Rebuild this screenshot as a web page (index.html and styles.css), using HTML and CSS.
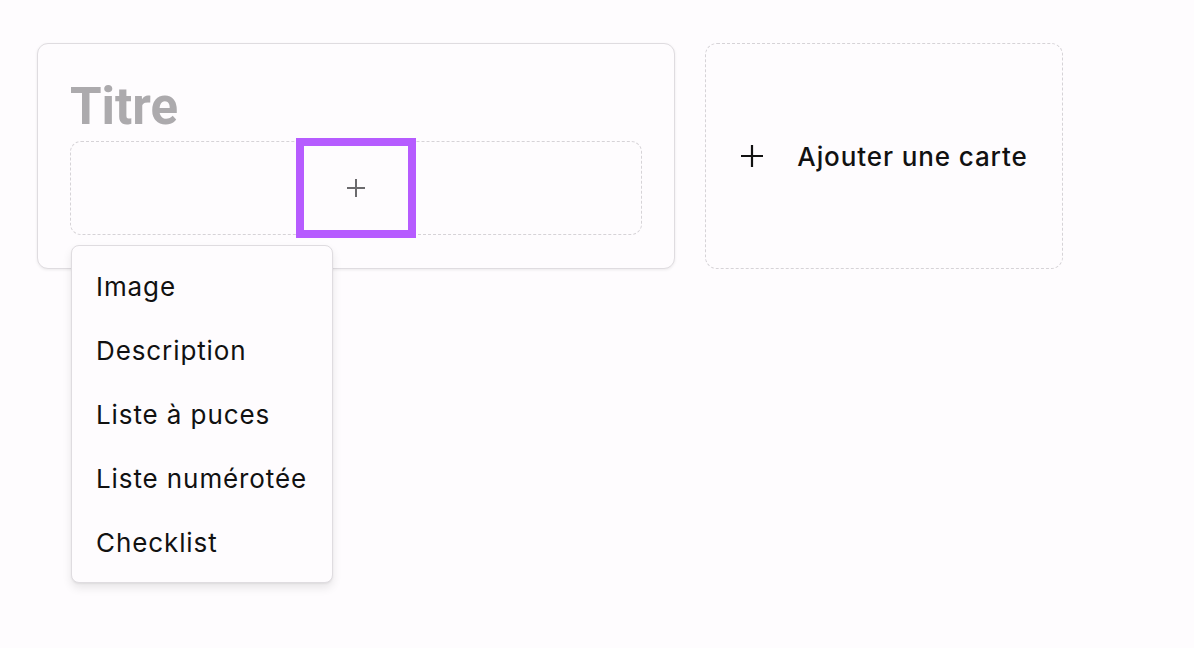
FILE: index.html
```html
<!DOCTYPE html>
<html lang="fr">
<head>
<meta charset="utf-8">
<title>Cartes</title>
<link rel="stylesheet" href="styles.css">
</head>
<body>
<main class="board">
  <section class="card">
    <h2 class="card-title">Titre</h2>
    <div class="drop-zone">
      <button class="add-block" type="button" aria-label="Ajouter un bloc">
        <svg width="22" height="22" viewBox="0 0 22 22" aria-hidden="true"><path d="M11 2v18M2 11h18" stroke="#6b6a6d" stroke-width="2" fill="none"/></svg>
      </button>
      <ul class="menu">
        <li class="menu-item">Image</li>
        <li class="menu-item">Description</li>
        <li class="menu-item">Liste à puces</li>
        <li class="menu-item">Liste numérotée</li>
        <li class="menu-item">Checklist</li>
      </ul>
    </div>
  </section>
  <button class="add-card" type="button">
    <svg width="24" height="24" viewBox="0 0 24 24" aria-hidden="true"><path d="M12 1v22M1 12h22" stroke="#111" stroke-width="2.2" fill="none"/></svg>
    <span>Ajouter une carte</span>
  </button>
</main>
</body>
</html>
```

FILE: styles.css
```css
* { box-sizing: border-box; }
html, body { margin: 0; padding: 0; }
body {
  background: #fefcfe;
  font-family: Inter, "Noto Sans", sans-serif;
  color: #111;
  width: 1194px;
  height: 648px;
  overflow: hidden;
}
.board {
  display: flex;
  align-items: flex-start;
  gap: 30px;
  padding: 43px 0 0 37px;
}
.card {
  width: 638px;
  height: 226px;
  border: 1px solid #dfdce0;
  border-radius: 11px;
  background: #fefcfe;
  box-shadow: 0 1px 3px rgba(0,0,0,0.08);
  padding: 32px;
  display: flex;
  flex-direction: column;
}
.card-title {
  margin: 0 0 3px;
  font-family: Roboto, "Liberation Sans", sans-serif;
  font-weight: 700;
  font-size: 51px;
  line-height: 62px;
  color: #acaaad;
}
.drop-zone {
  position: relative;
  height: 94px;
  border: 1px dashed #d6d3d7;
  border-radius: 11px;
  display: flex;
  align-items: center;
  justify-content: center;
}
.add-block {
  width: 104px;
  height: 84px;
  border: 0;
  background: #fefcfe;
  outline: 8px solid #b65cff;
  display: flex;
  align-items: center;
  justify-content: center;
  padding: 0;
  cursor: pointer;
}
.menu {
  position: absolute;
  left: 0;
  top: 103px;
  width: 262px;
  margin: 0;
  padding: 8px;
  list-style: none;
  background: #fefcfe;
  border: 1px solid #dfdce0;
  border-radius: 8px;
  box-shadow: 0 5px 10px rgba(0,0,0,0.09), 0 1px 2px rgba(0,0,0,0.06);
  z-index: 2;
}
.menu-item {
  height: 64px;
  display: flex;
  align-items: center;
  padding: 0 16px;
  font-size: 26px;
  letter-spacing: 0.9px;
  color: #111;
}
.add-card {
  width: 358px;
  height: 226px;
  border: 1px dashed #d6d3d7;
  border-radius: 12px;
  background: #fefcfe;
  display: flex;
  align-items: center;
  justify-content: center;
  gap: 33px;
  font-family: Inter, "Noto Sans", sans-serif;
  font-size: 26px;
  font-weight: 500;
  letter-spacing: 0.9px;
  color: #111;
  padding: 0;
  cursor: pointer;
}
```
